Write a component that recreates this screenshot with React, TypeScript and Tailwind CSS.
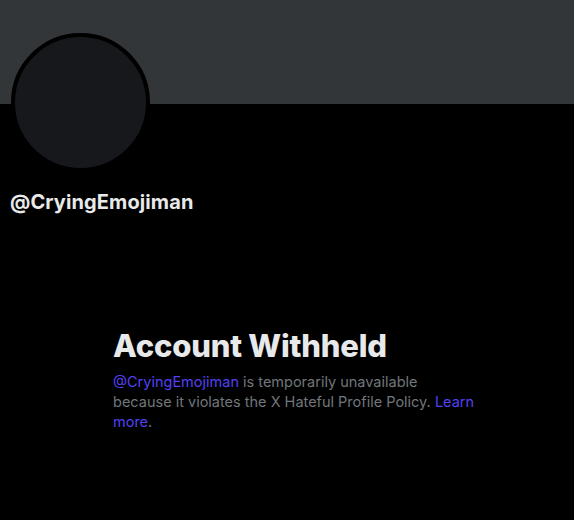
export default function App() {
  return (
    <div className="min-h-[520px] bg-black font-['Inter',sans-serif] text-[#e7e9ea]">
      {/* header banner */}
      <div className="h-[104px] bg-[#333639]" />

      {/* avatar + handle */}
      <div className="px-[11px]">
        <div className="-mt-[71px] h-[139px] w-[139px] rounded-full border-4 border-black bg-[#16181c]" />
        <div className="-ml-px mt-[18px] text-[20px] font-bold leading-6 tracking-[0.1px]">
          @CryingEmojiman
        </div>
      </div>

      {/* withheld notice */}
      <div className="ml-[113px] mt-[114px] w-[362px]">
        <h2 className="text-[31px] font-extrabold leading-9 tracking-[-0.2px]">
          Account Withheld
        </h2>
        <p className="mt-[8px] text-[14.5px] leading-5 text-[#71767b]">
          <span className="text-[#5341f5]">@CryingEmojiman</span> is temporarily unavailable
          because it violates the X Hateful Profile Policy.{' '}
          <span className="text-[#5341f5]">Learn more</span>.
        </p>
      </div>
    </div>
  );
}
